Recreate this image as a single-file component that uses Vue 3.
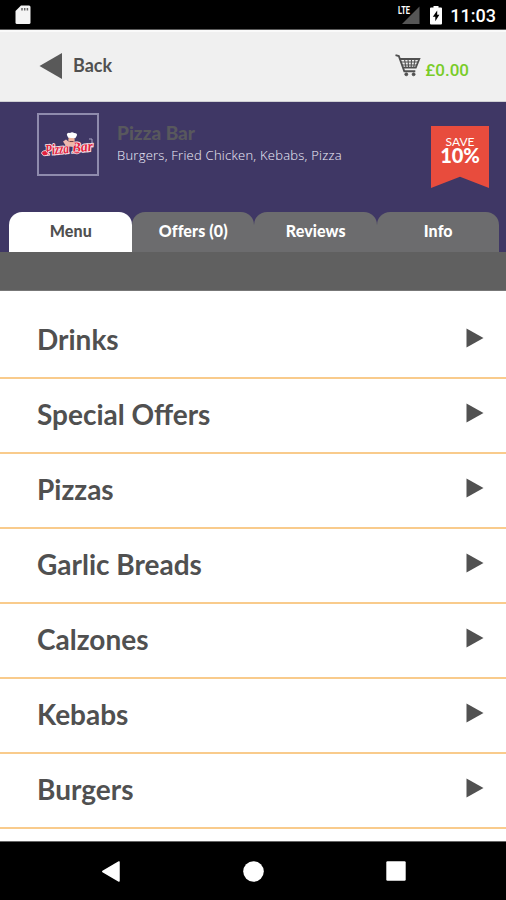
<template>
  <div class="screen">
    <div class="status-bar">
      <svg class="sd-card" width="16" height="20" viewBox="0 0 16 20">
        <path d="M6 0.5H14Q15.5 0.5 15.5 2V17.5Q15.5 19 14 19H2Q0.5 19 0.5 17.5V6Z" fill="#f4f4f4" />
        <path d="M7 3v2.6M9.7 3v2.6M12.4 3v2.6" stroke="#666" stroke-width="1.5" />
      </svg>
      <div class="status-icons">
        <svg class="signal" width="24" height="20" viewBox="0 0 24 20">
          <path d="M22.5 1.5V19H5Z" fill="#555" />
          <text x="1" y="9" textLength="12" lengthAdjust="spacingAndGlyphs">LTE</text>
        </svg>
        <svg class="battery" width="12" height="19" viewBox="0 0 12 19">
          <path d="M3.5 0H8.5V1.5H11Q12 1.5 12 2.5V17.5Q12 18.5 11 18.5H1Q0 18.5 0 17.5V2.5Q0 1.5 1 1.5H3.5Z" fill="#fff" />
          <path d="M7.2 4.5L2.8 10.7H5.3V15.3L9.4 8.8H7.2Z" fill="#000" />
        </svg>
        <span class="clock">11:03</span>
      </div>
    </div>

    <header class="top-bar">
      <button class="back">
        <svg width="23" height="26" viewBox="0 0 23 26">
          <path d="M0.5 13L23 0V26Z" fill="#595959" />
        </svg>
        <span>Back</span>
      </button>
      <div class="basket">
        <svg width="26" height="23" viewBox="0 0 26 23" fill="none" stroke="#505050">
          <path d="M0.5 1.2L3.8 2L9.3 17.2H20.3" stroke-width="1.9" />
          <path d="M4.8 5H24.3L20.8 13.6H8.2" stroke-width="1.8" />
          <path d="M6 8H23M7 11H22M9.5 5L11 14M13 5L13.6 14M16.5 5L16.2 14M20 5L18.6 14" stroke-width="1.1" />
          <circle cx="11.3" cy="20.3" r="1.5" fill="#505050" stroke-width="0.8" />
          <circle cx="18.6" cy="20.3" r="1.5" fill="#505050" stroke-width="0.8" />
        </svg>
        <span class="total">£0.00</span>
      </div>
    </header>

    <section class="restaurant">
      <div class="summary">
        <div class="logo">
          <svg width="58" height="59" viewBox="0 0 58 59">
            <g transform="rotate(-5 29 34)">
              <text class="logo-text" x="6" y="38" textLength="24" lengthAdjust="spacingAndGlyphs">Pizza</text>
              <text class="logo-text" x="33" y="38" textLength="21" lengthAdjust="spacingAndGlyphs">Bar</text>
            </g>
            <path d="M6.5 35.5Q2 36 2.8 39Q5.5 42.5 9.5 39Z" fill="#e31f3d" stroke="#f3dce4" stroke-width="0.9" />
            <path d="M34 37Q38 41 42 36.5Z" fill="#e31f3d" stroke="#f3dce4" stroke-width="0.8" />
            <path d="M24 26.5l3-2 3 2.5 4-0.5 3 3-3 2.5-7-1z" fill="#eeb8ae" />
            <circle cx="32.5" cy="25" r="3.2" fill="#eeb29b" />
            <path d="M29.2 22.8L27.8 19.8Q28 17.3 31 18Q33 16.3 35.2 18Q38.8 18 37.8 20.8L36.3 23.3Z" fill="#fff" />
            <path d="M30.5 26.5h4" stroke="#70404b" />
            <path d="M50 24h3v4" fill="none" stroke="#aaa5c5" />
          </svg>
        </div>
        <div class="details">
          <h1>Pizza Bar</h1>
          <p>Burgers, Fried Chicken, Kebabs, Pizza</p>
        </div>
        <div class="ribbon">
          <span class="ribbon-label">SAVE</span>
          <span class="ribbon-value">10%</span>
        </div>
      </div>
      <nav class="tabs">
        <button
          v-for="tab in tabs"
          :key="tab"
          class="tab"
          :class="{ active: tab === activeTab }"
          @click="activeTab = tab"
        >
          {{ tab }}
        </button>
      </nav>
    </section>

    <div class="divider-bar"></div>

    <ul class="categories">
      <li v-for="category in categories" :key="category" class="category">
        <span>{{ category }}</span>
        <svg width="18" height="20" viewBox="0 0 18 20">
          <path d="M0.5 0.5L17.5 10L0.5 19.5Z" fill="#515151" />
        </svg>
      </li>
    </ul>

    <footer class="nav-bar">
      <svg width="18" height="21" viewBox="0 0 18 21">
        <path d="M0.8 10.5L17 1V20Z" fill="#fff" stroke="#fff" stroke-width="1.5" stroke-linejoin="round" />
      </svg>
      <svg width="21" height="21" viewBox="0 0 21 21">
        <circle cx="10.5" cy="10.5" r="10.3" fill="#fff" />
      </svg>
      <svg width="20" height="20" viewBox="0 0 20 20">
        <rect x="0.3" y="0.3" width="19.4" height="19.4" rx="1.2" fill="#fff" />
      </svg>
    </footer>
  </div>
</template>

<script setup>
import { ref } from "vue";

const tabs = ["Menu", "Offers (0)", "Reviews", "Info"];
const activeTab = ref("Menu");

const categories = [
  "Drinks",
  "Special Offers",
  "Pizzas",
  "Garlic Breads",
  "Calzones",
  "Kebabs",
  "Burgers",
];
</script>

<style>
body {
  margin: 0;
  background: #fff;
}
</style>

<style scoped>
.screen {
  width: 506px;
  height: 900px;
  display: flex;
  flex-direction: column;
  overflow: hidden;
  background: #fff;
  font-family: Lato, sans-serif;
  color: #505050;
}

button {
  border: 0;
  padding: 0;
  margin: 0;
  background: none;
  font: inherit;
  color: inherit;
}

svg {
  display: block;
  flex: none;
}

.status-bar {
  height: 30px;
  box-sizing: border-box;
  padding: 5px 9px 0 15px;
  display: flex;
  justify-content: space-between;
  align-items: flex-start;
  background: #000;
  border-bottom: 1px solid #5a5a5a;
}

.status-icons {
  display: flex;
}

.signal text {
  font: bold 10px Roboto, sans-serif;
  fill: #fff;
}

.battery {
  margin: 1px 8px 0 9px;
}

.clock {
  padding-right: 1px;
  font: 500 18px/22px Roboto, sans-serif;
  color: #fff;
}

.top-bar {
  height: 72px;
  box-sizing: border-box;
  padding: 0 37px 0 39px;
  display: flex;
  justify-content: space-between;
  background: #f0f0f0;
  border-top: 2px solid #fafafa;
  border-bottom: 1px solid #cfcfd4;
}

.back {
  height: 67px;
  display: flex;
  align-items: center;
  gap: 11px;
  font-size: 18px;
  line-height: 20px;
  font-weight: 700;
}

.back span {
  padding-bottom: 1px;
}

.basket {
  display: flex;
  align-items: flex-start;
  gap: 4px;
  padding-top: 22px;
}

.total {
  padding-top: 5px;
  font: 500 17px/22px Roboto, sans-serif;
  color: #79cc28;
}

.restaurant {
  height: 150px;
  display: flex;
  flex-direction: column;
  justify-content: space-between;
  background: #3f3765;
}

.summary {
  display: flex;
  align-items: flex-start;
  padding: 11px 17px 0 37px;
}

.logo {
  width: 58px;
  height: 59px;
  border: 2px solid #8f8bad;
}

.logo-text {
  font: italic 900 15px "Liberation Serif", serif;
  fill: #e31f3d;
  stroke: #f6e3ea;
  stroke-width: 2px;
  paint-order: stroke;
}

.details {
  flex: 1;
  padding: 9px 0 0 18px;
}

h1 {
  margin: 0;
  font-size: 19px;
  line-height: 22px;
  font-weight: 900;
  color: #58585d;
}

p {
  margin: 0;
  font: 300 13px/22px "Open Sans", sans-serif;
  letter-spacing: 0.25px;
  color: #f0eefa;
}

.ribbon {
  width: 58px;
  height: 62px;
  margin-top: 13px;
  box-sizing: border-box;
  padding-top: 9px;
  display: flex;
  flex-direction: column;
  align-items: center;
  background: #e84c3d;
  clip-path: polygon(0 0, 100% 0, 100% 100%, 50% 82%, 0 100%);
  color: #fff;
}

.ribbon-label {
  font-size: 12px;
  line-height: 14px;
}

.ribbon-value {
  font-size: 20px;
  line-height: 13px;
  font-weight: 900;
}

.tabs {
  display: flex;
  padding: 0 7px 0 9px;
}

.tab {
  flex: 1;
  height: 40px;
  box-sizing: border-box;
  padding: 0 0 3px 1px;
  border-radius: 13px 13px 0 0;
  background: #6c6c6e;
  font-size: 16px;
  font-weight: 900;
  letter-spacing: 0.1px;
  color: #fff;
}

.tab.active {
  background: #fff;
  color: #505050;
}

.divider-bar {
  height: 39px;
  box-sizing: border-box;
  background: #606060;
  border-bottom: 1px solid #777;
}

.categories {
  flex: 1;
  margin: 0;
  padding: 12.7px 0 0;
  list-style: none;
  overflow: hidden;
}

.category {
  height: 75px;
  box-sizing: border-box;
  padding: 0 22px 2px 37px;
  display: flex;
  justify-content: space-between;
  align-items: center;
  border-bottom: 2px solid #f9cb8c;
  font-size: 28px;
  font-weight: 700;
}

.category svg {
  margin-bottom: 3px;
}

.nav-bar {
  height: 59px;
  box-sizing: border-box;
  padding: 0 100px 0 102px;
  display: flex;
  justify-content: space-between;
  align-items: center;
  background: #000;
  border-top: 1px solid #666;
}
</style>
